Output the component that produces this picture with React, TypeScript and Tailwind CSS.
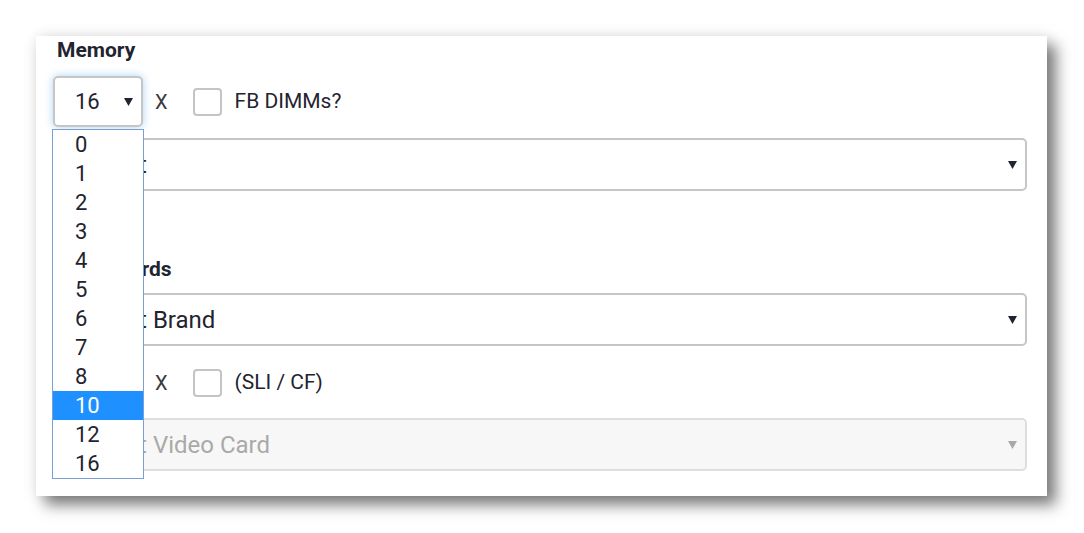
import React from 'react';

const options = ['0', '1', '2', '3', '4', '5', '6', '7', '8', '10', '12', '16'];

const Arrow: React.FC<{ muted?: boolean }> = ({ muted }) => (
    <svg width="9" height="8" viewBox="0 0 9 8" className="shrink-0">
        <polygon points="0,0 9,0 4.5,8" fill={muted ? '#a8a8a8' : '#1f2430'} />
    </svg>
);

const SelectBox: React.FC<{ label: string; disabled?: boolean; focused?: boolean; small?: boolean }> = ({ label, disabled, focused, small }) => (
    <div
        className={`flex items-center justify-between rounded-[5px] border-2 pr-[8px] ${small ? 'h-[51px] w-[90px] pl-[20px] text-[22px]' : 'h-[53px] w-full pl-[26px] text-[24px]'} ${disabled ? 'border-[#dedede] bg-[#f7f7f7] text-[#a9a9a9]' : 'border-[#c6c6c6] bg-white text-[#1f2430]'} ${focused ? 'shadow-[0_0_8px_rgba(102,175,233,0.55)]' : ''}`}
    >
        <span>{label}</span>
        <Arrow muted={disabled} />
    </div>
);

const CountRow: React.FC<{ value: string; text: string }> = ({ value, text }) => (
    <div className="flex items-center">
        <SelectBox label={value} small focused={value === '16'} />
        <span className="ml-[12px] text-[20px] text-[#3a3a3a]">X</span>
        <span className="ml-[25px] h-[28px] w-[29px] rounded-[4px] border-2 border-[#c4c4c4] bg-white" />
        <span className="ml-[13px] text-[21px] text-[#1f2430]">{text}</span>
    </div>
);

export default function App() {
    return (
        <div className="min-h-[533px] bg-white pl-[36px] pt-[36px]" style={{ fontFamily: 'Roboto, "Noto Sans", sans-serif' }}>
            <div className="relative h-[460px] w-[1011px] bg-white pl-[17px] pr-[20px] shadow-[9px_9px_14px_rgba(0,0,0,0.5),0_0_14px_rgba(0,0,0,0.09)]">
                <div className="ml-[4px] h-[28px] text-[21px] font-bold leading-[28px] text-[#1f2430]">Memory</div>
                <div className="mt-[12px]">
                    <CountRow value="16" text="FB DIMMs?" />
                </div>
                <div className="mt-[11px]">
                    <SelectBox label="Select" />
                </div>

                <div className="ml-[4px] mt-[64px] h-[28px] text-[21px] font-bold leading-[28px] text-[#1f2430]">Video Cards</div>
                <div className="mt-[10px]">
                    <SelectBox label="Select Brand" />
                </div>
                <div className="mt-[11px]">
                    <CountRow value="1" text="(SLI / CF)" />
                </div>
                <div className="mt-[10px]">
                    <SelectBox label="Select Video Card" disabled />
                </div>

                <ul className="absolute left-[16px] top-[93px] w-[92px] border border-[#7c9ed6] bg-white text-[22px] text-[#1f2430]">
                    {options.map((o) => (
                        <li key={o} className={`flex h-[29px] items-center pl-[22px] ${o === '10' ? 'bg-[#1e90ff] text-white' : ''}`}>
                            {o}
                        </li>
                    ))}
                </ul>
            </div>
        </div>
    );
}
